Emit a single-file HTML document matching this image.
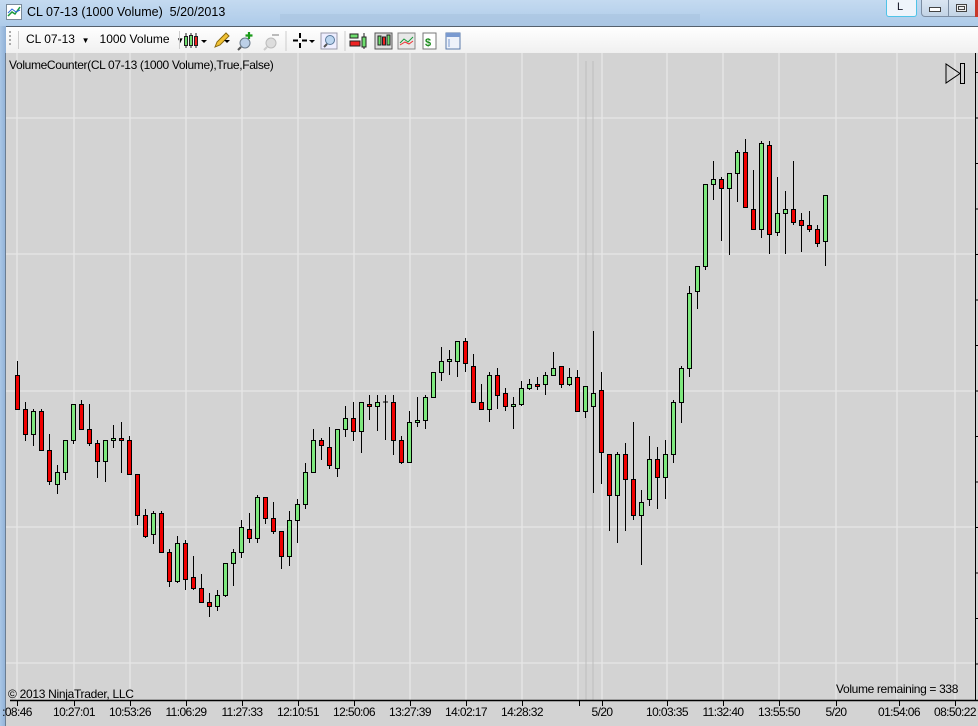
<!DOCTYPE html>
<html><head><meta charset="utf-8"><style>
*{margin:0;padding:0;box-sizing:border-box}
body{width:978px;height:726px;overflow:hidden;background:#d3d3d3;font-family:"Liberation Sans",sans-serif;position:relative}
.t{position:absolute;white-space:nowrap}
</style></head><body>
<div style="position:absolute;left:0;top:0;width:978px;height:26px;background:linear-gradient(#c4daf0,#aecbe9)"></div>
<div style="position:absolute;left:280px;top:14px;width:420px;height:12px;background:#a9c3df;opacity:.6"></div>
<svg class="t" style="left:6px;top:4px" width="16" height="16"><rect x="0.5" y="0.5" width="15" height="15" fill="#fff" stroke="#7a8a9a"/><polyline points="2,12 6,8 9,10 14,3" fill="none" stroke="#1a9a3a" stroke-width="1.5"/><polyline points="2,9 6,5 10,8 14,6" fill="none" stroke="#2a6ad8" stroke-width="1"/></svg>
<div class="t" style="left:27px;top:5px;font-size:12.5px;color:#000">CL 07-13 (1000 Volume)&nbsp; 5/20/2013</div>
<div style="position:absolute;left:886px;top:0;width:31px;height:17px;background:#eef4fb;border:1px solid #4fc3e8;border-top:none;border-radius:0 0 3px 3px"></div>
<div class="t" style="left:897px;top:1px;font-size:11px;color:#112">L</div>
<div style="position:absolute;left:921px;top:0;width:56px;height:17px;background:linear-gradient(#dbe6f2,#c3d4e6);border:1px solid #7d8ea3;border-top:none;border-radius:0 0 0 4px"></div>
<div style="position:absolute;left:948px;top:0;width:1px;height:17px;background:#7d8ea3"></div>
<div style="position:absolute;left:929px;top:7px;width:12px;height:5px;border:1px solid #444;background:#fff"></div>
<div style="position:absolute;left:956px;top:4px;width:11px;height:8px;border:1px solid #444;background:#eee"><div style="margin:1px;width:7px;height:4px;border:1px solid #444"></div></div>
<div style="position:absolute;left:975px;top:0;width:3px;height:17px;background:#c8382a"></div>
<div style="position:absolute;left:0;top:26px;width:978px;height:27px;background:linear-gradient(#ffffff,#f0f0f0);border-top:1px solid #55606c"></div>
<div style="position:absolute;left:0;top:26px;width:6px;height:700px;background:linear-gradient(90deg,#a9c6e6,#8fb0d6)"></div>
<div style="position:absolute;left:5px;top:53px;width:1px;height:673px;background:#6a7d92"></div>
<div style="position:absolute;left:9px;top:31px;width:2px;height:16px;background:repeating-linear-gradient(#aaa 0 2px,transparent 2px 4px)"></div>
<div style="position:absolute;left:18px;top:31px;width:1px;height:18px;background:#ccc"></div>
<div class="t" style="left:26px;top:32px;font-size:12px">CL 07-13&nbsp; <span style="font-size:8px">▼</span>&nbsp;&nbsp; 1000 Volume&nbsp; <span style="font-size:8px">▼</span></div>
<div style="position:absolute;left:179px;top:31px;width:1px;height:18px;background:#ccc"></div>
<svg class="t" style="left:183px;top:31px" width="290" height="20">
<g stroke="#222" stroke-width="1"><line x1="3" y1="2" x2="3" y2="17"/><line x1="8" y1="2" x2="8" y2="17"/><line x1="13" y1="2" x2="13" y2="17"/></g>
<rect x="1.5" y="5.5" width="3" height="9" fill="#6ede6e" stroke="#222"/><rect x="6.5" y="4.5" width="3" height="10" fill="#6ede6e" stroke="#222"/><rect x="11.5" y="5.5" width="3" height="9" fill="#e22" stroke="#222"/>
<path d="M18 9l3 3 3-3z" fill="#000"/>
<path d="M32 16l2-5 9-9 3 3-9 9z" fill="#f2c233" stroke="#8a6a10"/><path d="M41 9l3 3 3-3z" fill="#000"/>
<circle cx="62" cy="12" r="5" fill="#bcd0e8" stroke="#6a7a8a"/><line x1="58" y1="16" x2="55" y2="19" stroke="#555" stroke-width="2"/><path d="M66 1v7M62.5 4.5h7" stroke="#1a9a1a" stroke-width="2.2"/>
<circle cx="88" cy="12" r="5" fill="#ddd" stroke="#bbb"/><line x1="84" y1="16" x2="81" y2="19" stroke="#ccc" stroke-width="2"/><path d="M89 4h7" stroke="#bbb" stroke-width="2"/>
<line x1="103" y1="0" x2="103" y2="20" stroke="#ccc"/>
<path d="M117 2v5M117 12v5M110 9.5h5M119 9.5h5" stroke="#000" stroke-width="2"/><path d="M126 9l3 3 3-3z" fill="#000"/>
<rect x="138" y="2" width="16" height="16" fill="#eef" stroke="#99a"/><circle cx="147" cy="9" r="4.5" fill="#bcd6f0" stroke="#5a7a9a"/><line x1="144" y1="13" x2="141" y2="16" stroke="#555" stroke-width="2"/>
<line x1="162" y1="0" x2="162" y2="20" stroke="#ccc"/>
<rect x="167" y="3" width="8" height="4" fill="#6ede6e" stroke="#222"/><rect x="167" y="10" width="10" height="5" fill="#e22" stroke="#222"/><line x1="181" y1="2" x2="181" y2="18" stroke="#222"/><rect x="179" y="6" width="4" height="10" fill="#6ede6e" stroke="#222"/>
<rect x="192" y="2" width="17" height="16" fill="#ddd" stroke="#555"/><rect x="195" y="5" width="3" height="9" fill="#6ede6e" stroke="#222"/><rect x="199.5" y="6" width="3" height="8" fill="#e22" stroke="#222"/><rect x="204" y="4" width="3" height="10" fill="#6ede6e" stroke="#222"/>
<rect x="215" y="2" width="17" height="16" fill="#e8e8e8" stroke="#888"/><polyline points="217,12 221,8 225,11 230,6" fill="none" stroke="#1a9a3a"/><polyline points="217,14 222,11 226,13 230,10" fill="none" stroke="#e33"/>
<rect x="240" y="2" width="13" height="16" fill="#fff" stroke="#777"/><text x="242" y="15" font-size="11" font-weight="bold" fill="#1a8a1a" font-family="Liberation Sans">$</text>
<rect x="263" y="2" width="14" height="16" fill="#eef2fa" stroke="#5a7aaa"/><rect x="263" y="2" width="14" height="4" fill="#7a9ad0"/><line x1="266" y1="8" x2="266" y2="16" stroke="#7a9ad0"/>
</svg>
<svg class="t" style="left:0;top:53px" width="978" height="673">
<g stroke="#e6e6e6" stroke-width="1.3">
<line x1="6" y1="65" x2="975" y2="65"/><line x1="6" y1="201" x2="975" y2="201"/><line x1="6" y1="338" x2="975" y2="338"/><line x1="6" y1="474" x2="975" y2="474"/><line x1="6" y1="610" x2="975" y2="610"/>
<line x1="17" y1="0" x2="17" y2="647"/><line x1="74" y1="0" x2="74" y2="647"/><line x1="130" y1="0" x2="130" y2="647"/><line x1="186" y1="0" x2="186" y2="647"/><line x1="242" y1="0" x2="242" y2="647"/><line x1="298" y1="0" x2="298" y2="647"/><line x1="354" y1="0" x2="354" y2="647"/><line x1="410" y1="0" x2="410" y2="647"/><line x1="466" y1="0" x2="466" y2="647"/><line x1="522" y1="0" x2="522" y2="647"/><line x1="578" y1="0" x2="578" y2="647"/><line x1="602" y1="0" x2="602" y2="647"/><line x1="667" y1="0" x2="667" y2="647"/><line x1="723" y1="0" x2="723" y2="647"/><line x1="779" y1="0" x2="779" y2="647"/><line x1="836" y1="0" x2="836" y2="647"/><line x1="897" y1="0" x2="897" y2="647"/><line x1="955" y1="0" x2="955" y2="647"/>
</g>
<line x1="586" y1="8" x2="586" y2="647" stroke="#bcbcbc"/><line x1="593" y1="8" x2="593" y2="647" stroke="#bcbcbc"/>
<g id="cs" stroke="#000" stroke-width="1"></g>
<line x1="975.5" y1="0" x2="975.5" y2="647" stroke="#000"/>
<g stroke="#000" id="pt"></g>
<line x1="10" y1="647.5" x2="978" y2="647.5" stroke="#000" stroke-width="1.5"/>
<g stroke="#000" id="xt"></g>
<path d="M946 11v19l14-9.5z" fill="none" stroke="#000"/><rect x="960.5" y="10.5" width="4" height="20" fill="none" stroke="#000"/>
</svg>
<div class="t" style="left:9px;top:58px;font-size:12px;letter-spacing:-0.35px">VolumeCounter(CL 07-13 (1000 Volume),True,False)</div>
<div class="t" style="left:8px;top:687px;font-size:12px;letter-spacing:-0.3px">© 2013 NinjaTrader, LLC</div>
<div class="t" style="left:836px;top:682px;font-size:12px;letter-spacing:-0.35px">Volume remaining = 338</div>
<div id="xl"></div>
<script>
var d=[[375,409,361,409,0],[409,434,402,441,0],[411,434,409,446,1],[411,450,409,450,0],[450,481,434,485,0],[472,484,465,494,1],[440,472,440,480,1],[404,440,404,444,1],[404,429,400,429,0],[429,443,404,446,0],[443,461,440,478,0],[440,461,440,482,1],[438,440,425,448,1],[438,440,422,473,0],[440,474,436,474,0],[474,515,474,525,0],[515,536,509,538,0],[513,534,511,544,1],[513,552,511,552,0],[552,581,549,587,0],[543,581,536,583,1],[543,579,540,590,0],[577,588,556,590,0],[588,602,574,602,0],[602,606,593,617,0],[595,606,590,611,1],[563,595,563,597,1],[552,563,549,586,1],[527,552,520,558,1],[529,538,513,543,0],[497,538,495,543,1],[497,518,497,524,0],[518,531,502,534,0],[531,556,531,569,0],[520,556,511,566,1],[504,520,499,543,1],[472,504,463,509,1],[440,472,429,472,1],[440,445,438,460,0],[447,465,427,469,0],[429,468,429,477,1],[418,429,406,437,1],[418,431,402,441,0],[402,431,402,453,1],[404,406,395,420,0],[402,406,395,431,1],[402,402,395,440,1],[402,440,395,455,0],[440,462,436,464,0],[422,462,411,462,1],[420,422,397,427,1],[397,420,395,429,1],[372,397,372,397,1],[361,372,347,381,1],[359,361,350,375,1],[341,361,341,377,1],[341,363,338,372,0],[366,402,354,402,0],[402,409,384,409,0],[375,409,372,422,1],[375,395,368,409,0],[393,406,388,411,0],[404,406,397,429,1],[388,404,381,406,1],[384,388,379,390,1],[384,386,377,390,0],[375,384,372,395,1],[368,375,352,375,1],[366,384,366,388,0],[377,384,368,386,1],[377,411,370,411,0],[386,411,386,418,1],[393,406,331,493,1],[390,452,372,484,0],[454,495,454,531,0],[454,495,452,543,1],[454,479,443,531,0],[479,515,422,520,0],[502,515,490,565,1],[459,499,436,506,1],[459,477,447,509,0],[454,477,440,499,1],[402,454,400,463,1],[368,402,366,423,1],[293,368,286,377,1],[266,291,266,309,1],[184,266,184,270,1],[179,184,161,200,1],[179,188,177,241,0],[173,188,173,255,1],[152,173,150,202,1],[152,207,139,207,0],[209,229,170,229,0],[143,229,141,238,1],[145,234,141,254,0],[213,232,177,236,1],[209,213,191,254,1],[209,222,161,225,0],[220,225,213,252,0],[225,229,211,232,0],[229,243,225,247,0],[195,241,195,266,1]];
var s='',o=53;
for(var i=0;i<d.length;i++){var c=d[i],x=Math.round(17+8*i)+0.5;
s+='<line x1="'+x+'" y1="'+(c[2]-o)+'" x2="'+x+'" y2="'+(c[3]-o)+'"/>';
var h=Math.max(c[1]-c[0],0);
if(h<1){s+='<line x1="'+(x-2.5)+'" y1="'+(c[0]-o)+'" x2="'+(x+2.5)+'" y2="'+(c[0]-o)+'"/>';}
else s+='<rect x="'+(x-2)+'" y="'+(c[0]-o+0.5)+'" width="4" height="'+h+'" fill="'+(c[4]?'#7ee87e':'#f00000')+'"/>';}
document.getElementById('cs').innerHTML=s;
var p='';for(var y=19.5;y<647;y+=45.5)p+='<line x1="975" y1="'+y+'" x2="978" y2="'+y+'"/>';
document.getElementById('pt').innerHTML=p;
var xs=[17,74,130,186,242,298,354,410,466,522,579,602,667,723,779,836,899,955],q='';
xs.forEach(function(x){q+='<line x1="'+(x+.5)+'" y1="647" x2="'+(x+.5)+'" y2="653"/>'});
document.getElementById('xt').innerHTML=q;
var L=[[17,':08:46'],[74,'10:27:01'],[130,'10:53:26'],[186,'11:06:29'],[242,'11:27:33'],[298,'12:10:51'],[354,'12:50:06'],[410,'13:27:39'],[466,'14:02:17'],[522,'14:28:32'],[602,'5/20'],[667,'10:03:35'],[723,'11:32:40'],[779,'13:55:50'],[836,'5/20'],[899,'01:54:06'],[955,'08:50:22']],z='';
L.forEach(function(l){z+='<div class="t" style="left:'+(l[0]-40)+'px;width:80px;text-align:center;top:705px;font-size:12px;letter-spacing:-0.6px">'+l[1]+'</div>'});
document.getElementById('xl').innerHTML=z;
</script>
</body></html>
